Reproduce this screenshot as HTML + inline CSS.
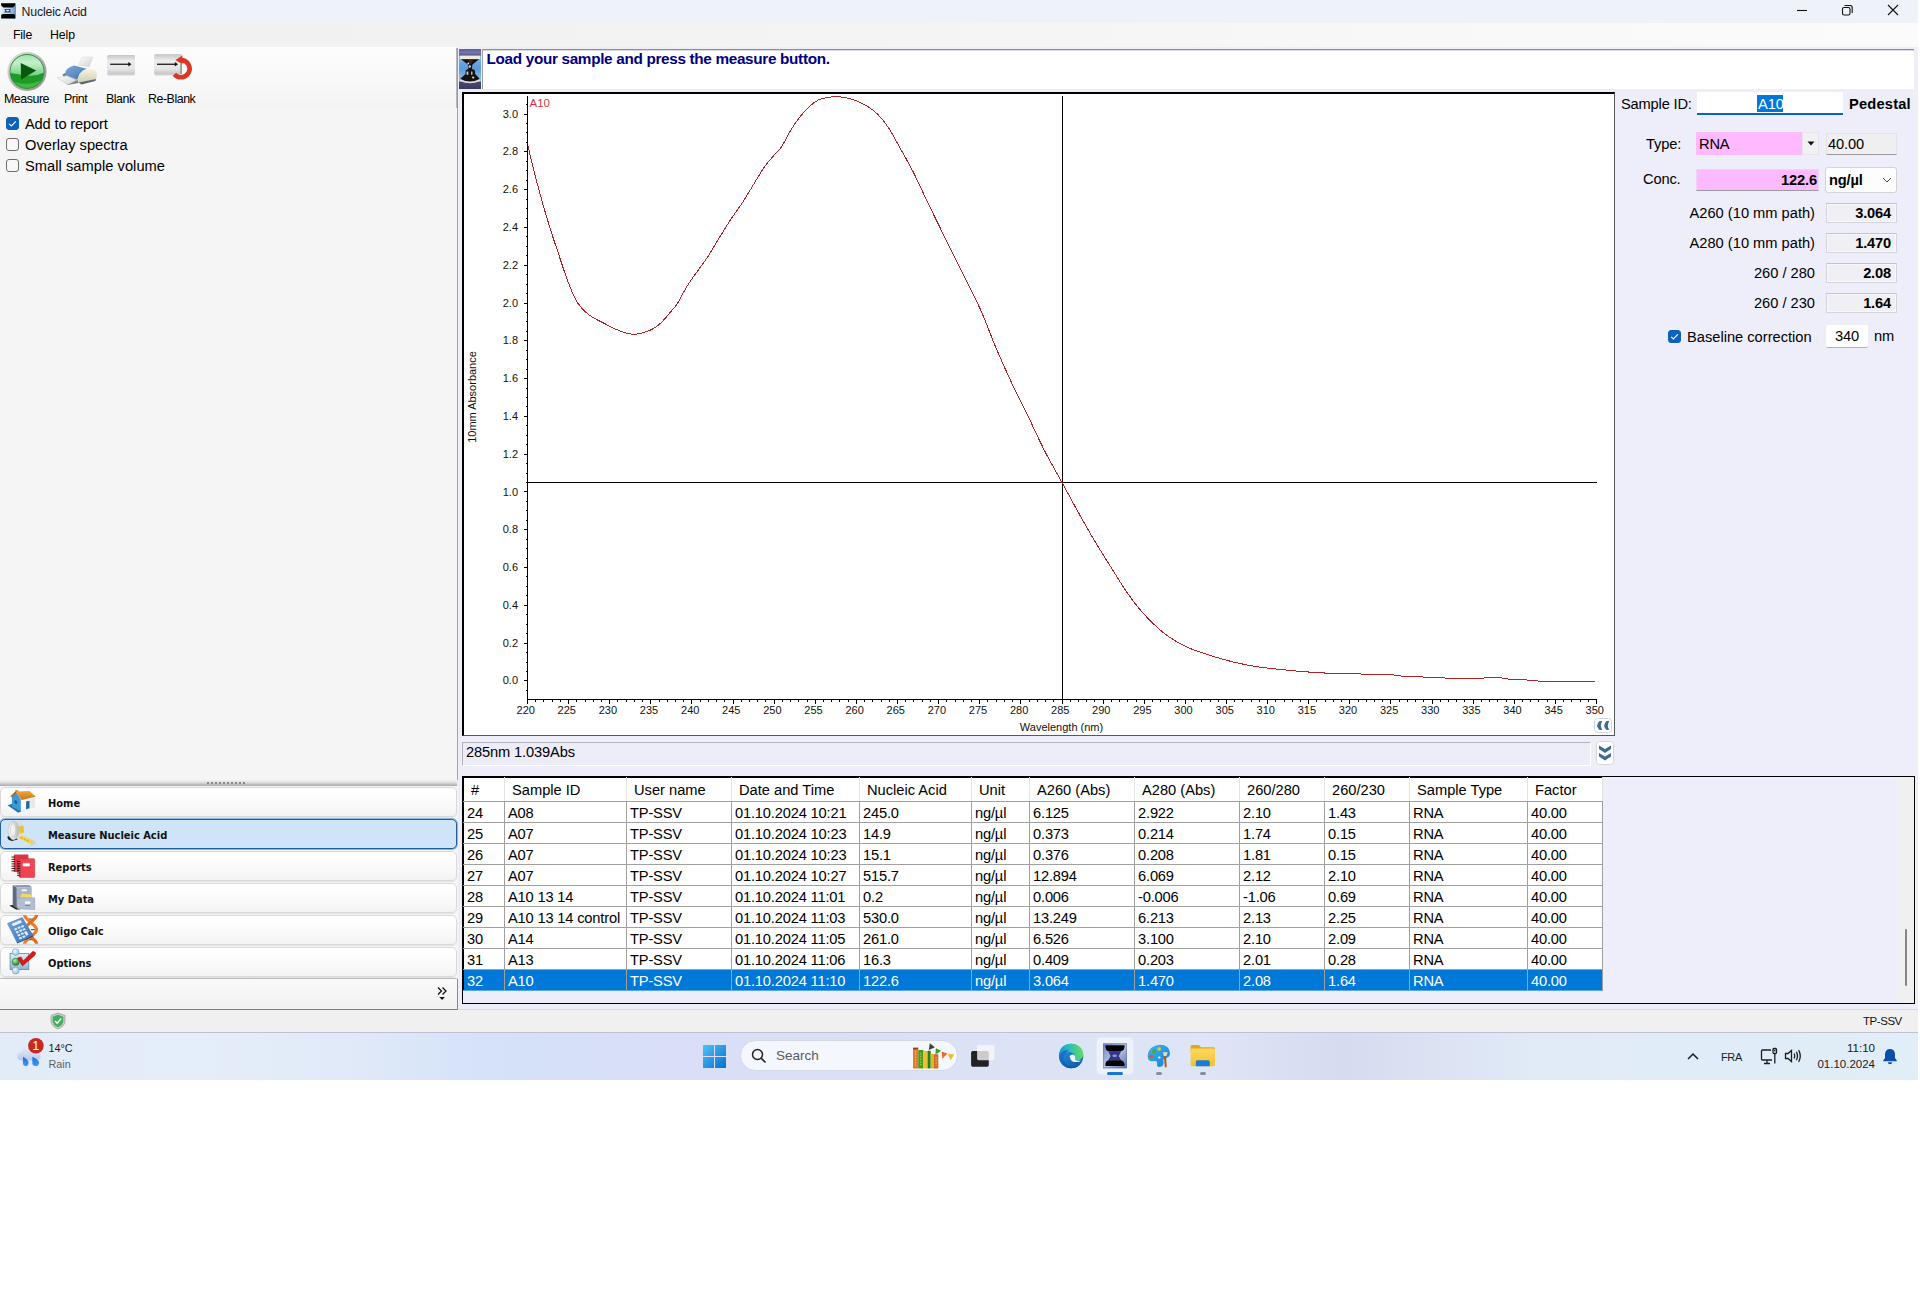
<!DOCTYPE html>
<html lang="en">
<head>
<meta charset="utf-8">
<title>Nucleic Acid</title>
<style>
*{box-sizing:border-box;margin:0;padding:0}
html,body{width:1920px;height:1312px;background:#fff;overflow:hidden}
body{position:relative;font-family:"Liberation Sans",sans-serif;color:#000;font-size:14.67px}
.abs{position:absolute}
.t{position:absolute;white-space:nowrap;line-height:1}
.seg{font-family:"DejaVu Sans","Liberation Sans",sans-serif}
#titlebar{left:0;top:0;width:1918px;height:23px;background:#eef2f9}
#menubar{left:0;top:23px;width:1918px;height:24px;background:linear-gradient(90deg,#f0f0f0 0%,#f2f2f2 25%,#f5f5f5 55%,#f9f9f9 80%,#fbfbfb 100%)}
#leftpane{left:0;top:47px;width:457px;height:962px;background:#f5f5f5}
#toolbar{left:0;top:47px;width:457px;height:61px;background:linear-gradient(#fdfdfd,#f8f8f8 60%,#f3f3f3)}
#rightpane{left:458px;top:47px;width:1460px;height:962px;background:#eeeefa}
#statusbar{left:0;top:1009px;width:1918px;height:23px;background:#f0f0f0;border-top:1px solid #dadada}
#taskbar{left:0;top:1032px;width:1918px;height:48px;background:linear-gradient(90deg,#e2ebf8 0%,#e4edf9 10%,#e1eaf8 18%,#d5e2f8 25%,#d6e0f7 30%,#d9dff6 36%,#dbe2f5 50%,#dde5f6 63%,#d6dcf0 70%,#dce3f3 75.500%,#e0ebf7 80%,#e0eef8 100%);border-top:1px solid #bcc2d0}
.lbl{font-size:14.67px;letter-spacing:-.15px}
.cb{position:absolute;width:13px;height:13px;border:1px solid #6e6e6e;border-radius:3px;background:#f8f8f8}
.cb.on{background:#0b62bd;border-color:#0b62bd}
.navbtn{position:absolute;left:0;width:457px;height:30px;border:1px solid #d9d9d9;border-radius:5px;background:linear-gradient(#ffffff,#fafafa 60%,#f2f2f2);box-shadow:0 1px 0 #e4e4e4}
.navbtn.sel{background:#cfe4f8;border:1px solid #1f5f9f;box-shadow:0 0 0 1px #8db7de}
.navtxt{position:absolute;left:47px;top:8.500px;font-family:"DejaVu Sans Condensed","DejaVu Sans",sans-serif;font-weight:bold;font-size:11px;white-space:nowrap;line-height:14px;color:#111}
.vbox{position:absolute;left:1826px;width:71px;height:20px;background:#f0f0f4;border:1px solid #d4d4dc;border-top-color:#c4c4cc;box-shadow:inset 0 0 0 1px #f8f8fc;font-weight:bold;font-size:14.67px;letter-spacing:-.17px;text-align:right;padding-right:5px;line-height:18px}
.rlbl{position:absolute;right:105px;letter-spacing:0;white-space:nowrap;font-size:14.67px;line-height:1}
table.grid{position:absolute;left:463px;top:777px;border-collapse:collapse;table-layout:fixed;font-size:14.67px;letter-spacing:-.17px;background:#fff}
table.grid td,table.grid th{border:1px solid #a0a0a0;height:21px;padding:2px 0 0 3px;white-space:nowrap;overflow:hidden;text-align:left;font-weight:normal;line-height:18px}
table.grid th{height:24px;border-color:#e4e4e4;border-bottom-color:#a0a0a0;padding:0 0 0 7px;letter-spacing:0;background:#fff}
table.grid th{border-top-color:#000}
table.grid td:first-child,table.grid th:first-child{border-left-color:#000}
table.grid tr.sel td:first-child{border-left-color:#000}
table.grid tr.sel td{background:#0078d7;color:#fff;border-color:#5aa6e6 #a0a0a0}
</style>
</head>
<body>
<div id="titlebar" class="abs"></div>
<svg class="abs" style="left:0;top:0" width="17" height="20" viewBox="0 0 17 20">
  <defs><linearGradient id="tig" x1="0" y1="0" x2="1" y2="0"><stop offset="0" stop-color="#e4f0fc"/><stop offset=".6" stop-color="#b4d0ee"/><stop offset="1" stop-color="#5e8cbc"/></linearGradient></defs>
  <rect x="1" y="3.200" width="14.900" height="15.300" fill="url(#tig)"/>
  <path d="M1.100 3.200H15.100V5.500L12.800 7.400H3.400L1.100 5.500Z" fill="#020204"/>
  <path d="M1.200 18.400V14.800L3 13.900H13.400L15.100 14.800V18.400Z" fill="#020204"/>
  <path d="M4.200 9H10.900V9.400H10.400V11.700L11.700 12.600H3.200L4.900 11.700V9.400H4.200Z" fill="#1f4f8f"/>
  <ellipse cx="7.600" cy="10.600" rx="1.700" ry=".8" fill="#d4e8fc"/>
</svg>
<div class="t" style="left:21.500px;top:6px;font-size:12.300px;letter-spacing:-.15px;color:#1a1a1a">Nucleic Acid</div>
<svg class="abs" style="left:1790px;top:0" width="120" height="22" viewBox="0 0 120 22" fill="none" stroke="#111" stroke-width="1.1">
  <path d="M7 10.5H17"/>
  <rect x="52.5" y="7.5" width="7.5" height="7.5" rx="1.6"/>
  <path d="M54.5 5.5H60A2.2 2.2 0 0 1 62.2 7.7V13"/>
  <path d="M98 5L108 15M108 5L98 15"/>
</svg>
<div id="menubar" class="abs"></div>
<div class="t" style="left:13px;top:28.500px;font-size:12.300px;letter-spacing:-.2px">File</div>
<div class="t" style="left:50px;top:28.500px;font-size:12.300px;letter-spacing:-.1px">Help</div>

<div id="leftpane" class="abs"></div>
<div id="toolbar" class="abs"></div>
<div class="abs" style="left:457px;top:47px;width:2px;height:962px;background:#f0f0f0"></div>
<div class="abs" style="left:456px;top:48px;width:2px;height:60px;background:linear-gradient(90deg,#c4c4c4,#8c8c8c)"></div>
<div class="abs" style="left:457px;top:108px;width:1px;height:672px;background:#a4a4a4"></div>

<!-- Measure icon -->
<svg class="abs" style="left:6px;top:50px" width="42" height="42" viewBox="0 0 42 42">
  <defs>
    <linearGradient id="mg2" x1="0" y1="0" x2="1" y2="1"><stop offset="0" stop-color="#ececec"/><stop offset=".5" stop-color="#b4b4b4"/><stop offset="1" stop-color="#8c8c8c"/></linearGradient>
    <linearGradient id="mg3" x1="0" y1="0" x2="0" y2="1"><stop offset="0" stop-color="#8fdc9c"/><stop offset=".5" stop-color="#c4efcc"/><stop offset="1" stop-color="#6fd07f"/></linearGradient>
    <clipPath id="mgc"><circle cx="21" cy="21.500" r="16.600"/></clipPath>
  </defs>
  <circle cx="21" cy="21.500" r="19.600" fill="url(#mg2)"/>
  <circle cx="21" cy="21.500" r="17.400" fill="#2f8f36"/>
  <circle cx="21" cy="21.500" r="16.600" fill="#1e9a26"/>
  <g clip-path="url(#mgc)">
    <path d="M0 0H42V20Q32 27 21 25.500Q10 24 0 22.500Z" fill="url(#mg3)"/>
    <path d="M4 30Q21 38 38 29V42H4Z" fill="#3dba42"/>
    <path d="M4 34Q21 43 38 33V42H4Z" fill="#229c2a"/>
  </g>
  <path d="M14.700 12.900L30.200 20.600L15.200 29.400Z" fill="#0a560c"/>
</svg>
<!-- Print / Blank / Re-Blank icons -->
<svg class="abs" style="left:50px;top:48px" width="150" height="44" viewBox="50 48 150 44">
  <defs>
    <linearGradient id="pg1" x1="0" y1="0" x2="1" y2="1"><stop offset="0" stop-color="#7fa8d6"/><stop offset=".5" stop-color="#5f8fc6"/><stop offset="1" stop-color="#3f6ea6"/></linearGradient>
    <linearGradient id="pg2" x1="0" y1="0" x2="0" y2="1"><stop offset="0" stop-color="#f6f5e4"/><stop offset="1" stop-color="#cfcdb2"/></linearGradient>
    <linearGradient id="pg3" x1="0" y1="0" x2="1" y2="1"><stop offset="0" stop-color="#ffffff"/><stop offset="1" stop-color="#cfcfcf"/></linearGradient>
    <linearGradient id="bg1" x1="0" y1="0" x2="0" y2="1"><stop offset="0" stop-color="#c6c6c6"/><stop offset=".3" stop-color="#ececec"/><stop offset=".7" stop-color="#e6e6e6"/><stop offset="1" stop-color="#c4c4c4"/></linearGradient>
  </defs>
  <!-- printer -->
  <path d="M82.400 57.200L92.800 57.200L89.100 66.800L78.500 65Z" fill="url(#pg3)" stroke="#d0d0d0" stroke-width=".5"/>
  <path d="M62.500 74.500L66 72.500L78 80.500L78.500 83L67.500 85Z" fill="#5c6268" opacity=".8"/>
  <path d="M65.600 71.500Q66.500 68 74.200 65.600L86.700 68.700Q82 71 79.700 73.800L77.300 80L65.600 75.500Z" fill="url(#pg1)"/>
  <path d="M79.700 73.800Q82 70 86.700 68.700Q93 68.500 96.100 70.700Q97.200 73 96.900 75.300L96.100 79.300L79.700 82.600L77.300 80Z" fill="url(#pg2)"/>
  <path d="M78.500 82.400L96.100 79L95.400 81L81.500 84.500Z" fill="#5f6a6a"/>
  <path d="M57.400 77.700L66.800 75.700L77 80L67.600 84.700Z" fill="url(#pg3)" stroke="#c4c4c4" stroke-width=".5"/>
  <!-- blank -->
  <rect x="107.400" y="55" width="27.400" height="20.500" rx="1.500" fill="#bdbdbd" opacity=".55"/>
  <rect x="107.400" y="55" width="27.400" height="19.600" rx="1.500" fill="url(#bg1)"/>
  <path d="M110.200 64.250H130" stroke="#111" stroke-width="1.250"/>
  <path d="M128.300 62L131.500 64.250L128.300 66.500Z" fill="#111"/>
  <!-- re-blank -->
  <rect x="154.300" y="54.300" width="27.700" height="21.200" rx="1.500" fill="#bdbdbd" opacity=".55"/>
  <rect x="154.300" y="54.300" width="27.700" height="20.300" rx="1.500" fill="url(#bg1)"/>
  <rect x="180.200" y="63.500" width="1.800" height="10.500" fill="#9a9a9a"/>
  <path d="M157 64.250H176.500" stroke="#111" stroke-width="1.250"/>
  <path d="M174.800 62L178 64.250L174.800 66.500Z" fill="#111"/>
  <path d="M181.750 60.130A8.600 8.600 0 1 1 174.410 74.230" fill="none" stroke="#dc3626" stroke-width="4.600"/>
  <path d="M175.400 59.900L182.400 55.400L182.400 64.200Z" fill="#dc3626"/>
</svg>
<div class="t" style="left:4px;top:92.500px;font-size:12.400px;letter-spacing:-.45px">Measure</div>
<div class="t" style="left:64px;top:92.500px;font-size:12.400px;letter-spacing:-.45px">Print</div>
<div class="t" style="left:106px;top:92.500px;font-size:12.400px;letter-spacing:-.45px">Blank</div>
<div class="t" style="left:148px;top:92.500px;font-size:12.400px;letter-spacing:-.45px">Re-Blank</div>

<!-- checkboxes -->
<div class="cb on" style="left:6px;top:117px"></div>
<svg class="abs" style="left:6px;top:117px" width="13" height="13" viewBox="0 0 13 13"><path d="M3.2 6.8L5.4 9L9.8 4.4" fill="none" stroke="#fff" stroke-width="1.2"/></svg>
<div class="cb" style="left:6px;top:138px"></div>
<div class="cb" style="left:6px;top:159px"></div>
<div class="t lbl" style="left:25px;top:116.500px;letter-spacing:-.16px">Add to report</div>
<div class="t lbl" style="left:25px;top:137.500px;letter-spacing:0">Overlay spectra</div>
<div class="t lbl" style="left:25px;top:158.500px;letter-spacing:.04px">Small sample volume</div>
<!-- splitter -->
<div class="abs" style="left:0;top:780px;width:457px;height:6px;background:linear-gradient(#f2f2f2,#dcdcdc 45%,#a8a8a8)"></div>
<svg class="abs" style="left:206px;top:781px" width="42" height="4" viewBox="0 0 42 4"><g fill="#8a8a8a"><rect x="1" y="1" width="2" height="2"/><rect x="5" y="1" width="2" height="2"/><rect x="9" y="1" width="2" height="2"/><rect x="13" y="1" width="2" height="2"/><rect x="17" y="1" width="2" height="2"/><rect x="21" y="1" width="2" height="2"/><rect x="25" y="1" width="2" height="2"/><rect x="29" y="1" width="2" height="2"/><rect x="33" y="1" width="2" height="2"/><rect x="37" y="1" width="2" height="2"/></g></svg>
<div class="abs" style="left:0;top:786px;width:458px;height:223px;background:#f6f6f9"></div>

<div class="navbtn" style="top:787px"><div class="navtxt">Home</div></div>
<div class="navbtn sel" style="top:819px"><div class="navtxt">Measure Nucleic Acid</div></div>
<div class="navbtn" style="top:851px"><div class="navtxt">Reports</div></div>
<div class="navbtn" style="top:883px"><div class="navtxt">My Data</div></div>
<div class="navbtn" style="top:915px"><div class="navtxt">Oligo Calc</div></div>
<div class="navbtn" style="top:947px"><div class="navtxt">Options</div></div>
<div class="abs" style="left:0;top:978px;width:457px;height:1px;background:#b9b9b9"></div>
<div class="abs" style="left:0;top:979px;width:457px;height:30px;background:linear-gradient(#fafafa,#f1f1f1)"></div>

<svg class="abs" style="left:436px;top:985px" width="14" height="16" viewBox="0 0 14 16"><path d="M2 2.500L5.500 6L2 9.500M6.500 2.500L10 6L6.500 9.500" fill="none" stroke="#111" stroke-width="1.300"/><path d="M3.300 12H8.900L6.100 15Z" fill="#111"/></svg>

<!-- nav icons -->
<svg class="abs" style="left:0;top:786px" width="46" height="192" viewBox="0 786 46 192">
  <defs>
    <linearGradient id="rf" x1="0" y1="0" x2="0" y2="1"><stop offset="0" stop-color="#f2a83a"/><stop offset="1" stop-color="#c5761a"/></linearGradient>
    <linearGradient id="wl" x1="0" y1="0" x2="1" y2="0"><stop offset="0" stop-color="#ffffff"/><stop offset="1" stop-color="#dfe5ea"/></linearGradient>
    <linearGradient id="tp" x1="0" y1="0" x2="1" y2="0"><stop offset="0" stop-color="#fafafa"/><stop offset=".6" stop-color="#d8d8d8"/><stop offset="1" stop-color="#b9b9b9"/></linearGradient>
    <linearGradient id="calc" x1="0" y1="0" x2="1" y2="1"><stop offset="0" stop-color="#6fa4dc"/><stop offset="1" stop-color="#3a74bc"/></linearGradient>
    <linearGradient id="opt" x1="0" y1="0" x2="0" y2="1"><stop offset="0" stop-color="#e4eef8"/><stop offset="1" stop-color="#8fb2d6"/></linearGradient>
    <radialGradient id="ball" cx="35%" cy="30%" r="70%"><stop offset="0" stop-color="#f4fafe"/><stop offset="1" stop-color="#9cc0e0"/></radialGradient>
    <radialGradient id="gball" cx="35%" cy="30%" r="70%"><stop offset="0" stop-color="#b8f0a8"/><stop offset="1" stop-color="#1f8a28"/></radialGradient>
  </defs>
  <!-- home -->
  <path d="M7.500 805.300L12.300 803.800L24.600 809.800L18.300 812.800Z" fill="#1f78b0"/>
  <path d="M11.900 796L16 791.800L20.900 799.700V811.300L11.900 806.400Z" fill="#3d9ad6"/>
  <path d="M20.900 800L34.700 797.400V807.500L20.900 811.300Z" fill="url(#wl)"/>
  <path d="M26.100 801.600L29.500 800.800V808.300L26.100 809.200Z" fill="#1a6a9c"/>
  <path d="M14.600 800L17 801V804.200L14.600 803.300Z" fill="#16588a"/>
  <path d="M15.300 790.300H18.300V793L15.300 793.500Z" fill="#c5761a"/>
  <path d="M10.300 796.400L15.300 791.500L16.600 792.400L12 797Z" fill="#a8600f"/>
  <path d="M15.300 791.500L29.500 791.100L35.800 796.700L21.700 799.900Z" fill="url(#rf)"/>
  <!-- tape measure -->
  <path d="M7.500 836.500Q7 840 12 841L17.500 839.500L16 835Z" fill="#1c1c1c"/>
  <path d="M13 821.300Q19 820.500 21.500 823L22.500 835L17 838.500Q14 840.500 11 839Z" fill="#dcdcdc"/>
  <ellipse cx="13.400" cy="830.500" rx="5.300" ry="9.300" fill="url(#tp)" stroke="#aaa" stroke-width=".5"/>
  <ellipse cx="13" cy="830" rx="2.700" ry="6.300" fill="#f2f2f2" stroke="#bdbdbd" stroke-width=".5"/>
  <path d="M19 826.300L23.600 825.600L23.900 832.800L19.600 833.600Z" fill="#f0c030"/>
  <path d="M17.500 837.400L22.400 835.500L35.500 841.500L29.900 843.700Z" fill="#f2d24a"/>
  <path d="M29.900 843.300L35.500 841.200L35.800 844L31 846Z" fill="#cfcfcf"/>
  <path d="M21 837.200L22 838.800M24 838.500L25 840.100M27 839.900L28 841.500" stroke="#9a8218" stroke-width=".6"/>
  <!-- reports -->
  <rect x="13.800" y="854.600" width="14.600" height="17.500" rx="1" fill="#dc3444"/>
  <rect x="19" y="858.700" width="15.700" height="18.700" rx="1" fill="#f04454" stroke="#c42838" stroke-width=".5"/>
  <rect x="22.800" y="863.200" width="7.100" height="3" rx=".8" fill="#fff" stroke="#c8c8c8" stroke-width=".4"/>
  <path d="M11.500 857H15M11.500 859.300H15M11.500 861.600H15M11.500 863.900H15M11.500 866.200H15M11.500 868.500H15M11.500 870.800H15M17 861.500H20.500M17 863.800H20.500M17 866.100H20.500M17 868.400H20.500M17 870.700H20.500M17 873H20.500M17 875.300H20.500" stroke="#2a0a0e" stroke-width=".9"/>
  <!-- my data -->
  <path d="M9.300 905.400L12.700 905L20.200 909.500H16.100Z" fill="#1c1c1c"/>
  <path d="M12.700 885.200L16.800 887.500V908.800L12.700 905.400Z" fill="#5d6a82"/>
  <path d="M12.700 885.200L29.100 885.100L31.700 887.100L16.800 887.500Z" fill="#8c98ae"/>
  <path d="M16.800 887.500L31.700 887.100V897.900H16.800Z" fill="#a6b2c6"/>
  <rect x="21.700" y="889.300" width="5.200" height="1.900" fill="#f6f6f6"/>
  <path d="M19.800 897.900L21.700 893.400L31.400 894.600L32.900 897.900Z" fill="#f2d860"/>
  <path d="M17.500 897.900H34.700V909.500L17.500 908.800Z" fill="#b2bed2" stroke="#76829a" stroke-width=".4"/>
  <rect x="25" y="901.300" width="5.200" height="2.600" fill="#f6f6f6"/>
  <rect x="25" y="905" width="5.200" height="1.100" fill="#7c889e"/>
  <!-- oligo calc -->
  <path d="M27 919.200H34.200M27 939.600H34.200M31 929.700H36" stroke="#2a6ab0" stroke-width="1.300"/>
  <path d="M24.600 915C24.600 920 36.600 924.500 36.600 929.700C36.600 934.500 24.600 939 24.600 943.700" fill="none" stroke="#f07c28" stroke-width="3.200"/>
  <path d="M36.600 915C36.600 920 24.600 924.500 24.600 929.700C24.600 934.500 36.600 939 36.600 943.700" fill="none" stroke="#e86c18" stroke-width="3.200"/>
  <path d="M7.100 923.300L8 925.500L17.500 943.500L16.800 942.400Z" fill="#1f4f8f"/>
  <path d="M7.100 923.300L22.400 917L33.200 935.300L16.800 942.400Z" fill="url(#calc)"/>
  <path d="M16.800 942.400L33.200 935.300L33.400 936.500L17.300 943.600Z" fill="#1f4f8f"/>
  <path d="M11.600 923.700L20.500 920L22 922.600L13.100 926.300Z" fill="#e8f0fa"/>
  <g fill="#e4eefa"><path d="M14 928.700L16.400 927.700L17.400 929.500L15 930.500Z"/><path d="M17.400 927.300L19.800 926.300L20.800 928.100L18.400 929.100Z"/><path d="M20.800 925.900L23.200 924.900L24.200 926.700L21.800 927.700Z"/><path d="M15.600 931.700L18 930.700L19 932.500L16.600 933.500Z"/><path d="M19 930.300L21.400 929.300L22.400 931.100L20 932.100Z"/><path d="M22.400 928.900L24.800 927.900L25.800 929.700L23.400 930.700Z"/><path d="M17.200 934.700L19.600 933.700L20.600 935.500L18.200 936.500Z"/><path d="M20.600 933.300L23 932.300L24 934.100L21.600 935.100Z"/><path d="M24 931.900L26.400 930.900L28.600 934.700L26.200 935.700Z"/><path d="M18.800 937.700L21.200 936.700L22.200 938.500L19.800 939.500Z"/><path d="M22.200 936.300L24.600 935.300L25.600 937.100L23.200 938.100Z"/></g>
  <!-- options -->
  <rect x="10.100" y="953.600" width="18.700" height="16" fill="url(#opt)" stroke="#5f86ae" stroke-width=".8"/>
  <circle cx="15.700" cy="952.100" r="3.400" fill="url(#ball)" stroke="#6f9cc4" stroke-width=".6"/>
  <circle cx="15.700" cy="970.700" r="3.400" fill="url(#ball)" stroke="#6f9cc4" stroke-width=".6"/>
  <circle cx="15.700" cy="961.800" r="3.600" fill="url(#gball)" stroke="#1f7a28" stroke-width=".6"/>
  <path d="M17.500 958L20.900 956.900L23.200 961L32.900 951.300L35.800 952.800L34.700 955.400L22.400 965.900Z" fill="#e01818" stroke="#8a0c0c" stroke-width=".5"/>
</svg>
<div id="rightpane" class="abs"></div>
<!-- instruction bar -->
<div class="abs" style="left:482px;top:49px;width:1432px;height:40px;background:#fff;border-top:1px solid #8e8e96;border-left:1px solid #9c9ca4;box-shadow:inset 0 1px 0 #d8d8e0"></div>
<svg class="abs" style="left:459px;top:49px" width="22" height="40" viewBox="0 0 22 40">
  <defs>
    <linearGradient id="ig0" x1="0" y1="0" x2="0" y2="1"><stop offset="0" stop-color="#5f5f98"/><stop offset=".5" stop-color="#7474ac"/><stop offset="1" stop-color="#55558a"/></linearGradient>
    <linearGradient id="ig1" x1="0" y1="0" x2="0" y2="1"><stop offset="0" stop-color="#7ab4e8"/><stop offset=".5" stop-color="#5a9ad8"/><stop offset="1" stop-color="#9cc4e8"/></linearGradient>
    <linearGradient id="ig2" x1="0" y1="0" x2="0" y2="1"><stop offset="0" stop-color="#4a4a72"/><stop offset="1" stop-color="#3a3a5c"/></linearGradient>
  </defs>
  <rect width="22" height="7" fill="url(#ig0)"/>
  <rect y="6.700" width="22" height="26" fill="url(#ig1)"/>
  <rect y="32.500" width="22" height="7.500" fill="url(#ig2)"/>
  <rect x=".8" y="6.700" width="20.400" height="3.400" fill="#ecebdc"/>
  <path d="M2 10.200H20L13.500 15.500L12.800 19.800L15.800 21.200L16.200 25L20.500 29.500Q21 33 11 33.500Q1 33 1.500 29.500L6.500 25L6.800 21.200L9.500 19.800L8.800 15.500Z" fill="#121212"/>
  <path d="M1.500 30Q11 35 20.500 30L20.800 32Q11 36.500 1.200 32Z" fill="#eef0f0" opacity=".9"/>
  <circle cx="9.300" cy="14.500" r=".9" fill="#fff" opacity=".9"/>
  <circle cx="10.800" cy="17.500" r="1.200" fill="#e8e8e8" opacity=".9"/>
  <rect x="7.600" y="22.500" width="1.700" height="3.300" fill="#f4ecd8" opacity=".9"/>
  <rect x="12" y="22.500" width="1.500" height="3.300" fill="#e8dcc0" opacity=".8"/>
  <circle cx="14.200" cy="28.500" r="1.100" fill="#fff4d8" opacity=".9"/>
  <path d="M9.500 11H14L12.500 15H10.500Z" fill="#5a2418" opacity=".7"/>
</svg>
<div class="t" style="left:486.500px;top:51px;font-size:15.300px;letter-spacing:-.32px;font-weight:bold;color:#000080">Load your sample and press the measure button.</div>

<!-- plot frame -->
<div class="abs" style="left:462px;top:92px;width:1153px;height:644px;background:#fff;border-top:2px solid #000;border-left:2px solid #000;border-right:1px solid #5a5a5a;border-bottom:1px solid #5a5a5a"></div>
<svg class="abs" style="left:0;top:0" width="1920" height="760" viewBox="0 0 1920 760" font-family="'Liberation Sans',sans-serif" font-size="11px">
<g stroke="#000" stroke-width="1" fill="none" shape-rendering="crispEdges">
<path d="M527.5 96V699.5H1597"/>
<path d="M527.5 690.5h-2M527.5 680.5h-4M527.5 671.5h-2M527.5 662.5h-2M527.5 652.5h-2M527.5 643.5h-4M527.5 633.5h-2M527.5 624.5h-2M527.5 614.5h-2M527.5 605.5h-4M527.5 595.5h-2M527.5 586.5h-2M527.5 576.5h-2M527.5 567.5h-4M527.5 558.5h-2M527.5 548.5h-2M527.5 539.5h-2M527.5 529.5h-4M527.5 520.5h-2M527.5 510.5h-2M527.5 501.5h-2M527.5 491.5h-4M527.5 482.5h-2M527.5 473.5h-2M527.5 463.5h-2M527.5 454.5h-4M527.5 444.5h-2M527.5 435.5h-2M527.5 425.5h-2M527.5 416.5h-4M527.5 406.5h-2M527.5 397.5h-2M527.5 388.5h-2M527.5 378.5h-4M527.5 369.5h-2M527.5 359.5h-2M527.5 350.5h-2M527.5 340.5h-4M527.5 331.5h-2M527.5 321.5h-2M527.5 312.5h-2M527.5 303.5h-4M527.5 293.5h-2M527.5 284.5h-2M527.5 274.5h-2M527.5 265.5h-4M527.5 255.5h-2M527.5 246.5h-2M527.5 236.5h-2M527.5 227.5h-4M527.5 218.5h-2M527.5 208.5h-2M527.5 199.5h-2M527.5 189.5h-4M527.5 180.5h-2M527.5 170.5h-2M527.5 161.5h-2M527.5 151.5h-4M527.5 142.5h-2M527.5 132.5h-2M527.5 123.5h-2M527.5 114.5h-4M527.5 104.5h-2M527.5 699.5v4M535.5 699.5v2M543.5 699.5v2M552.5 699.5v2M560.5 699.5v2M568.5 699.5v4M576.5 699.5v2M585.5 699.5v2M593.5 699.5v2M601.5 699.5v2M609.5 699.5v4M617.5 699.5v2M626.5 699.5v2M634.5 699.5v2M642.5 699.5v2M650.5 699.5v4M659.5 699.5v2M667.5 699.5v2M675.5 699.5v2M683.5 699.5v2M691.5 699.5v4M700.5 699.5v2M708.5 699.5v2M716.5 699.5v2M724.5 699.5v2M733.5 699.5v4M741.5 699.5v2M749.5 699.5v2M757.5 699.5v2M765.5 699.5v2M774.5 699.5v4M782.5 699.5v2M790.5 699.5v2M798.5 699.5v2M807.5 699.5v2M815.5 699.5v4M823.5 699.5v2M831.5 699.5v2M839.5 699.5v2M848.5 699.5v2M856.5 699.5v4M864.5 699.5v2M872.5 699.5v2M881.5 699.5v2M889.5 699.5v2M897.5 699.5v4M905.5 699.5v2M913.5 699.5v2M922.5 699.5v2M930.5 699.5v2M938.5 699.5v4M946.5 699.5v2M955.5 699.5v2M963.5 699.5v2M971.5 699.5v2M979.5 699.5v4M987.5 699.5v2M996.5 699.5v2M1004.5 699.5v2M1012.5 699.5v2M1020.5 699.5v4M1029.5 699.5v2M1037.5 699.5v2M1045.5 699.5v2M1053.5 699.5v2M1062.5 699.5v4M1070.5 699.5v2M1078.5 699.5v2M1086.5 699.5v2M1094.5 699.5v2M1103.5 699.5v4M1111.5 699.5v2M1119.5 699.5v2M1127.5 699.5v2M1136.5 699.5v2M1144.5 699.5v4M1152.5 699.5v2M1160.5 699.5v2M1168.5 699.5v2M1177.5 699.5v2M1185.5 699.5v4M1193.5 699.5v2M1201.5 699.5v2M1210.5 699.5v2M1218.5 699.5v2M1226.5 699.5v4M1234.5 699.5v2M1242.5 699.5v2M1251.5 699.5v2M1259.5 699.5v2M1267.5 699.5v4M1275.5 699.5v2M1284.5 699.5v2M1292.5 699.5v2M1300.5 699.5v2M1308.5 699.5v4M1316.5 699.5v2M1325.5 699.5v2M1333.5 699.5v2M1341.5 699.5v2M1349.5 699.5v4M1358.5 699.5v2M1366.5 699.5v2M1374.5 699.5v2M1382.5 699.5v2M1390.5 699.5v4M1399.5 699.5v2M1407.5 699.5v2M1415.5 699.5v2M1423.5 699.5v2M1432.5 699.5v4M1440.5 699.5v2M1448.5 699.5v2M1456.5 699.5v2M1464.5 699.5v2M1473.5 699.5v4M1481.5 699.5v2M1489.5 699.5v2M1497.5 699.5v2M1506.5 699.5v2M1514.5 699.5v4M1522.5 699.5v2M1530.5 699.5v2M1538.5 699.5v2M1547.5 699.5v2M1555.5 699.5v4M1563.5 699.5v2M1571.5 699.5v2M1580.5 699.5v2M1588.5 699.5v2M1596.5 699.5v4"/>
<path d="M1062.5 96V699M528 482.5H1597"/>
</g>
<g fill="#111" text-anchor="end">
<text x="518" y="684.4">0.0</text>
<text x="518" y="646.6">0.2</text>
<text x="518" y="608.8">0.4</text>
<text x="518" y="571.0">0.6</text>
<text x="518" y="533.3">0.8</text>
<text x="518" y="495.5">1.0</text>
<text x="518" y="457.7">1.2</text>
<text x="518" y="419.9">1.4</text>
<text x="518" y="382.1">1.6</text>
<text x="518" y="344.3">1.8</text>
<text x="518" y="306.5">2.0</text>
<text x="518" y="268.7">2.2</text>
<text x="518" y="231.0">2.4</text>
<text x="518" y="193.2">2.6</text>
<text x="518" y="155.4">2.8</text>
<text x="518" y="117.6">3.0</text>
</g><g fill="#111" text-anchor="middle">
<text x="525.7" y="714">220</text>
<text x="566.8" y="714">225</text>
<text x="607.9" y="714">230</text>
<text x="649.0" y="714">235</text>
<text x="690.2" y="714">240</text>
<text x="731.3" y="714">245</text>
<text x="772.4" y="714">250</text>
<text x="813.5" y="714">255</text>
<text x="854.6" y="714">260</text>
<text x="895.7" y="714">265</text>
<text x="936.9" y="714">270</text>
<text x="978.0" y="714">275</text>
<text x="1019.1" y="714">280</text>
<text x="1060.2" y="714">285</text>
<text x="1101.3" y="714">290</text>
<text x="1142.4" y="714">295</text>
<text x="1183.5" y="714">300</text>
<text x="1224.7" y="714">305</text>
<text x="1265.8" y="714">310</text>
<text x="1306.9" y="714">315</text>
<text x="1348.0" y="714">320</text>
<text x="1389.1" y="714">325</text>
<text x="1430.2" y="714">330</text>
<text x="1471.4" y="714">335</text>
<text x="1512.5" y="714">340</text>
<text x="1553.6" y="714">345</text>
<text x="1594.7" y="714">350</text>
<text x="1061.500" y="731">Wavelength (nm)</text>
<text transform="translate(476 397) rotate(-90)">10mm Absorbance</text>
</g>
<text x="529.500" y="107" fill="#c8393b" font-size="11.500px">A10</text>
<path d="M528.0 145.9C528.9 149.7 531.5 161.1 533.4 168.6C535.3 176.1 537.3 183.9 539.3 191.2C541.3 198.5 543.1 205.1 545.2 212.2C547.3 219.3 549.7 227.0 551.9 234.0C554.1 241.0 556.4 247.4 558.6 254.1C560.8 260.8 563.3 268.6 565.3 274.2C567.2 279.8 568.8 283.8 570.3 287.6C571.8 291.4 573.5 295.0 574.5 297.2C575.5 299.4 575.6 299.6 576.2 300.7C576.8 301.8 577.0 302.0 578.2 303.6C579.5 305.2 581.4 308.1 583.7 310.3C586.0 312.5 588.7 314.9 592.1 317.0C595.5 319.1 600.0 321.2 603.9 323.2C607.8 325.2 612.0 327.5 615.6 329.1C619.2 330.7 622.6 332.0 625.7 332.9C628.8 333.8 631.2 334.3 634.0 334.3C636.8 334.3 639.3 333.8 642.4 332.9C645.5 332.0 649.4 330.8 652.5 329.1C655.6 327.4 658.0 325.6 660.9 322.9C663.8 320.2 666.9 316.3 669.7 313.0C672.5 309.7 675.1 307.1 677.7 303.0C680.4 298.9 683.0 293.0 685.6 288.6C688.2 284.2 689.9 281.8 693.5 276.6C697.1 271.4 703.1 263.8 707.4 257.3C711.7 250.8 715.3 244.2 719.3 237.8C723.3 231.4 727.2 224.8 731.2 218.8C735.2 212.8 739.2 207.7 743.1 201.6C747.0 195.5 751.3 188.1 754.9 182.2C758.5 176.3 761.6 170.9 764.9 166.3C768.2 161.7 772.0 157.7 774.8 154.4C777.6 151.1 779.1 150.5 781.7 146.5C784.3 142.5 787.8 135.2 790.6 130.6C793.4 126.0 795.5 122.6 798.5 118.7C801.5 114.8 805.1 110.5 808.4 107.4C811.7 104.3 815.1 101.6 818.4 99.9C821.7 98.2 825.3 97.8 828.3 97.3C831.3 96.8 833.6 96.9 836.2 96.9C838.8 96.9 841.1 96.8 844.1 97.3C847.1 97.8 850.7 98.7 854.0 99.9C857.3 101.1 860.6 102.5 863.9 104.3C867.2 106.1 870.8 108.4 873.8 110.8C876.8 113.2 879.1 115.6 881.8 118.7C884.4 121.8 887.2 125.8 889.7 129.6C892.2 133.4 892.6 134.6 896.5 141.6C900.4 148.6 907.4 160.7 912.9 171.4C918.4 182.1 923.9 194.7 929.4 206.0C934.9 217.3 940.3 228.2 945.8 239.3C951.3 250.4 956.5 260.5 962.3 272.3C968.1 284.1 975.3 298.0 980.8 310.3C986.3 322.6 990.1 333.9 995.2 346.0C1000.4 358.1 1006.2 371.3 1011.7 383.0C1017.2 394.7 1022.6 405.0 1028.1 416.3C1033.6 427.6 1038.9 439.7 1044.6 450.8C1050.3 461.9 1056.8 473.0 1062.3 483.0C1067.8 493.0 1072.2 501.4 1077.5 510.9C1082.8 520.4 1088.5 530.5 1094.0 539.8C1099.5 549.1 1105.0 557.8 1110.5 566.5C1116.0 575.2 1122.0 585.1 1126.9 592.3C1131.8 599.5 1135.4 604.2 1140.0 609.6C1144.6 615.0 1149.6 620.2 1154.4 624.7C1159.2 629.2 1163.1 632.9 1168.7 636.7C1174.3 640.5 1181.1 644.4 1187.9 647.5C1194.7 650.6 1201.5 652.7 1209.5 655.2C1217.5 657.7 1227.4 660.6 1235.8 662.6C1244.2 664.6 1251.0 665.8 1259.8 667.1C1268.6 668.4 1278.1 669.3 1288.5 670.3C1298.9 671.3 1310.9 672.3 1322.1 672.9C1333.3 673.5 1344.4 673.6 1355.6 673.9C1366.8 674.2 1381.2 674.2 1389.2 674.6C1397.2 675.0 1397.1 675.8 1403.5 676.2C1409.9 676.6 1418.7 676.8 1427.5 677.2C1436.3 677.6 1447.4 678.2 1456.2 678.4C1465.0 678.6 1475.0 678.6 1480.2 678.4C1485.4 678.2 1484.6 677.4 1487.4 677.2C1490.2 677.0 1493.4 676.9 1497.0 677.2C1500.6 677.5 1503.8 678.6 1509.0 679.1C1514.2 679.6 1522.1 679.7 1528.1 680.1C1534.1 680.5 1533.7 681.1 1544.9 681.3C1556.1 681.5 1586.8 681.3 1595.2 681.3" fill="none" stroke="#b22222" stroke-width="1" shape-rendering="crispEdges"/>
</svg>
<!-- collapse buttons -->
<svg class="abs" style="left:1594px;top:718px" width="18" height="15" viewBox="0 0 18 15">
  <rect x=".5" y=".5" width="17" height="14" rx="3" fill="#fff" stroke="#d4d6de"/>
  <path d="M8.300 3Q5.500 7.500 8.300 12L5.600 12Q0.800 7.500 5.600 3ZM15.300 3Q12.500 7.500 15.300 12L12.600 12Q7.800 7.500 12.600 3Z" fill="#3d6d8e"/>
</svg>
<svg class="abs" style="left:1596px;top:741px" width="18" height="24" viewBox="0 0 18 24">
  <rect x=".5" y=".5" width="17" height="23" rx="3" fill="#fff" stroke="#d4d6de"/>
  <path d="M3 4.500L9 8L15 4.500V8L9 12L3 8ZM3 12L9 15.500L15 12V15.500L9 19.500L3 15.500Z" fill="#3d6d8e"/>
</svg>
<!-- cursor readout -->
<div class="abs" style="left:462px;top:742px;width:1129px;height:24px;background:#ededf9;border-top:1px solid #b4b4bc;border-left:1px solid #b4b4bc;border-right:1px solid #fff;border-bottom:1px solid #fff"></div>
<div class="t" style="left:466px;top:745px;font-size:14.670px;letter-spacing:-.14px">285nm 1.039Abs</div>

<!-- fields -->
<div class="t lbl" style="left:1621px;top:97px;letter-spacing:-.18px">Sample ID:</div>
<div class="abs" style="left:1697px;top:92px;width:146px;height:23px;background:#fff;border-bottom:2px solid #0a64bf"></div>
<div class="abs" style="left:1757px;top:95px;width:26px;height:17px;background:#0078d7"></div>
<div class="t lbl" style="left:1758px;top:97px;color:#fff">A10</div>
<div class="t lbl" style="left:1849px;top:97px;font-weight:bold;letter-spacing:.2px">Pedestal</div>

<div class="t lbl" style="left:1646px;top:137px">Type:</div>
<div class="abs" style="left:1696px;top:132px;width:106px;height:23px;background:#ffb9ff"></div>
<div class="abs" style="left:1802px;top:132px;width:17px;height:23px;background:#f1f1f3;border:1px solid #e6e6ea"></div>
<svg class="abs" style="left:1807px;top:141px" width="8" height="5" viewBox="0 0 8 5"><path d="M.5 .5H7.500L4 4.500Z" fill="#111"/></svg>
<div class="t lbl" style="left:1699px;top:137px">RNA</div>
<div class="abs" style="left:1826px;top:133px;width:71px;height:22px;background:#efeff1;border:1px solid #e2e2e8;border-bottom:1px solid #9a9aa2"></div>
<div class="t lbl" style="left:1828px;top:137px">40.00</div>

<div class="t lbl" style="left:1643px;top:172px">Conc.</div>
<div class="abs" style="left:1696px;top:169px;width:123px;height:22px;background:#ffb9ff;border:1px solid #f0d4f4;border-bottom:1px solid #9a9aa2"></div>
<div class="t lbl" style="left:1740px;top:173px;width:77px;text-align:right;font-weight:bold">122.6</div>
<div class="abs" style="left:1825px;top:167px;width:72px;height:26px;background:#fdfdfe;border:1px solid #d2d2d8;border-radius:3px"></div>
<div class="t lbl" style="left:1829px;top:173px;font-weight:bold">ng/µl</div>
<svg class="abs" style="left:1882px;top:177px" width="10" height="6" viewBox="0 0 10 6"><path d="M1 1L5 5L9 1" fill="none" stroke="#444" stroke-width="1"/></svg>

<div class="rlbl" style="top:206px">A260 (10 mm path)</div>
<div class="vbox" style="top:203px">3.064</div>
<div class="rlbl" style="top:236px">A280 (10 mm path)</div>
<div class="vbox" style="top:233px">1.470</div>
<div class="rlbl" style="top:266px">260 / 280</div>
<div class="vbox" style="top:263px">2.08</div>
<div class="rlbl" style="top:296px">260 / 230</div>
<div class="vbox" style="top:293px">1.64</div>

<div class="cb on" style="left:1668px;top:330px"></div>
<svg class="abs" style="left:1668px;top:330px" width="13" height="13" viewBox="0 0 13 13"><path d="M3.200 6.800L5.400 9L9.800 4.400" fill="none" stroke="#fff" stroke-width="1.200"/></svg>
<div class="t lbl" style="left:1687px;top:330px;letter-spacing:0">Baseline correction</div>
<div class="abs" style="left:1826px;top:325px;width:42px;height:23px;background:#fff;border-radius:2px;border-bottom:1px solid #b4b4bc"></div>
<div class="t lbl" style="left:1826px;top:329px;width:42px;text-align:center">340</div>
<div class="t lbl" style="left:1874px;top:329px">nm</div>
<div class="abs" style="left:462px;top:776px;width:1453px;height:228px;background:#eeeefa;border:1px solid #000"></div>
<div class="abs" style="left:1897px;top:777px;width:17px;height:226px;background:#f0f0f0"></div>
<div class="abs" style="left:1905px;top:929px;width:2px;height:57px;background:#868686;border-radius:1px"></div>
<table class="grid" style="width:1139px"><colgroup>
<col style="width:41px">
<col style="width:122px">
<col style="width:105px">
<col style="width:128px">
<col style="width:112px">
<col style="width:58px">
<col style="width:105px">
<col style="width:105px">
<col style="width:85px">
<col style="width:85px">
<col style="width:118px">
<col style="width:75px">
</colgroup><tr><th>#</th><th>Sample ID</th><th>User name</th><th>Date and Time</th><th>Nucleic Acid</th><th>Unit</th><th>A260 (Abs)</th><th>A280 (Abs)</th><th>260/280</th><th>260/230</th><th>Sample Type</th><th>Factor</th></tr>
<tr><td>24</td><td>A08</td><td>TP-SSV</td><td>01.10.2024 10:21</td><td>245.0</td><td>ng/µl</td><td>6.125</td><td>2.922</td><td>2.10</td><td>1.43</td><td>RNA</td><td>40.00</td></tr>
<tr><td>25</td><td>A07</td><td>TP-SSV</td><td>01.10.2024 10:23</td><td>14.9</td><td>ng/µl</td><td>0.373</td><td>0.214</td><td>1.74</td><td>0.15</td><td>RNA</td><td>40.00</td></tr>
<tr><td>26</td><td>A07</td><td>TP-SSV</td><td>01.10.2024 10:23</td><td>15.1</td><td>ng/µl</td><td>0.376</td><td>0.208</td><td>1.81</td><td>0.15</td><td>RNA</td><td>40.00</td></tr>
<tr><td>27</td><td>A07</td><td>TP-SSV</td><td>01.10.2024 10:27</td><td>515.7</td><td>ng/µl</td><td>12.894</td><td>6.069</td><td>2.12</td><td>2.10</td><td>RNA</td><td>40.00</td></tr>
<tr><td>28</td><td>A10 13 14</td><td>TP-SSV</td><td>01.10.2024 11:01</td><td>0.2</td><td>ng/µl</td><td>0.006</td><td>-0.006</td><td>-1.06</td><td>0.69</td><td>RNA</td><td>40.00</td></tr>
<tr><td>29</td><td>A10 13 14 control</td><td>TP-SSV</td><td>01.10.2024 11:03</td><td>530.0</td><td>ng/µl</td><td>13.249</td><td>6.213</td><td>2.13</td><td>2.25</td><td>RNA</td><td>40.00</td></tr>
<tr><td>30</td><td>A14</td><td>TP-SSV</td><td>01.10.2024 11:05</td><td>261.0</td><td>ng/µl</td><td>6.526</td><td>3.100</td><td>2.10</td><td>2.09</td><td>RNA</td><td>40.00</td></tr>
<tr><td>31</td><td>A13</td><td>TP-SSV</td><td>01.10.2024 11:06</td><td>16.3</td><td>ng/µl</td><td>0.409</td><td>0.203</td><td>2.01</td><td>0.28</td><td>RNA</td><td>40.00</td></tr>
<tr class="sel"><td>32</td><td>A10</td><td>TP-SSV</td><td>01.10.2024 11:10</td><td>122.6</td><td>ng/µl</td><td>3.064</td><td>1.470</td><td>2.08</td><td>1.64</td><td>RNA</td><td>40.00</td></tr>
</table>
<div id="statusbar" class="abs"></div>
<div class="abs" style="left:0;top:1009px;width:458px;height:1px;background:#7e7e7e"></div>
<div class="abs" style="left:457px;top:979px;width:1px;height:31px;background:#8a8a8a"></div>
<svg class="abs" style="left:50px;top:1012px" width="16" height="18" viewBox="0 0 16 18">
  <path d="M8 1L15 3.500V9Q15 14 8 17Q1 14 1 9V3.500Z" fill="#c9cccf" stroke="#9aa0a6" stroke-width=".8"/>
  <path d="M8 2.800L13.300 4.800V9Q13.300 12.800 8 15.200Q2.700 12.800 2.700 9V4.800Z" fill="#3fae5a"/>
  <path d="M5 9L7.200 11.200L11.200 6.500" fill="none" stroke="#fff" stroke-width="1.500"/>
</svg>
<div class="t" style="left:1863px;top:1016px;font-size:11.500px;letter-spacing:-.45px;color:#111">TP-SSV</div>

<div id="taskbar" class="abs"></div>
<!-- weather -->
<svg class="abs" style="left:14px;top:1036px" width="32" height="36" viewBox="0 0 32 36">
  <defs><linearGradient id="cl" x1="0" y1="0" x2="0" y2="1"><stop offset="0" stop-color="#e6ecfa"/><stop offset="1" stop-color="#b9c8ec"/></linearGradient>
  <linearGradient id="dr" x1="0" y1="0" x2="0" y2="1"><stop offset="0" stop-color="#1a6ae8"/><stop offset="1" stop-color="#3a9cf8"/></linearGradient></defs>
  <path d="M8 24.400Q3 24.400 3.200 20Q3.600 16.500 7.500 16.500Q8.500 11 14.500 10.600Q20.500 10.600 21.800 16Q26.600 16 26.600 20.500Q26.400 24.400 22 24.400Z" fill="url(#cl)"/>
  <path d="M9 20.800Q14.600 23.500 14.600 27Q14.400 30.100 11.700 30.100Q8.900 30 8.900 27Z M18.400 20.800Q25 23.500 25 27Q24.800 30.100 21.700 30.100Q18.300 30 18.300 27Z" fill="url(#dr)"/>
  <circle cx="21.900" cy="9.800" r="7.800" fill="#c42b1c"/>
</svg>
<div class="t" style="left:32.400px;top:1040px;font-size:12px;color:#fff;width:7px;text-align:center">1</div>
<div class="t" style="left:48.500px;top:1042.800px;font-size:10.800px;color:#1b1b1b">14°C</div>
<div class="t" style="left:48.500px;top:1058.800px;font-size:10.800px;color:#5f5f5f">Rain</div>
<!-- start -->
<svg class="abs" style="left:703px;top:1045px" width="23" height="23" viewBox="0 0 23 23">
  <defs><linearGradient id="wg" x1="0" y1="0" x2="1" y2="1"><stop offset="0" stop-color="#4cc2f4"/><stop offset="1" stop-color="#0a6fd0"/></linearGradient></defs>
  <path d="M0 0H11V11H0ZM12 0H23V11H12ZM0 12H11V23H0ZM12 12H23V23H12Z" fill="url(#wg)"/>
</svg>
<!-- search -->
<div class="abs" style="left:740px;top:1040px;width:218px;height:31px;border-radius:16px;background:#f4f7fd;border:1px solid #d3d9e6"></div>
<svg class="abs" style="left:751px;top:1048px" width="16" height="16" viewBox="0 0 16 16"><circle cx="6.500" cy="6.500" r="5" fill="none" stroke="#222" stroke-width="1.500"/><path d="M10.200 10.200L14.500 14.500" stroke="#222" stroke-width="1.600"/></svg>
<div class="t" style="left:776px;top:1049px;font-size:13.500px;color:#5a5a5a">Search</div>
<svg class="abs" style="left:910px;top:1040px" width="48" height="32" viewBox="910 1040 48 32">
  <rect x="913" y="1047.700" width="5.200" height="20.800" rx=".8" fill="#e8782a"/><rect x="913" y="1047.700" width="5.200" height="1.600" fill="#b03424"/>
  <rect x="918.200" y="1050" width="5.200" height="18.500" rx=".6" fill="#4a9a1c"/>
  <rect x="923.400" y="1051" width="4.200" height="17.500" rx=".6" fill="#e8c234"/>
  <rect x="927.600" y="1050.800" width="3.100" height="17.700" rx=".5" fill="#2e7c1c"/>
  <rect x="930.700" y="1053.700" width="3.200" height="14.800" rx=".5" fill="#c8c02c"/>
  <rect x="933.900" y="1054.200" width="4.400" height="14.300" rx=".6" fill="#d86a20"/>
  <path d="M915.600 1051V1066M920.800 1053V1066M936.100 1057V1066" stroke="#f6d878" stroke-width="1" stroke-dasharray="1.500 1.200" opacity=".8"/>
  <path d="M929.700 1043.300L934.900 1047.200L928.900 1050.100Z" fill="#3a4046"/>
  <path d="M935.900 1048.200L941.100 1051.100L935.400 1054.500Z" fill="#3c9a1c"/>
  <path d="M941.700 1051.600L947.400 1053.400L942.400 1058.700Z" fill="#ea6a20"/>
  <path d="M947.900 1053.400L954.200 1054.500L950.500 1060.500Z" fill="#eac020"/>
</svg>
<!-- task view -->
<svg class="abs" style="left:970px;top:1044px" width="26" height="24" viewBox="970 1044 26 24">
  <rect x="971.100" y="1051.100" width="17.700" height="15.600" rx="1.600" fill="#222"/>
  <rect x="977.100" y="1045.100" width="17.400" height="15.100" rx="1.600" fill="#f7f7f7" opacity=".8"/>
</svg>
<!-- edge -->
<svg class="abs" style="left:1056px;top:1040px" width="30" height="32" viewBox="1056 1040 30 32">
  <defs>
    <linearGradient id="eg1" x1="0" y1="0" x2="1" y2="1"><stop offset="0" stop-color="#2a9ae0"/><stop offset="1" stop-color="#0c52a0"/></linearGradient>
    <linearGradient id="eg2" x1="0" y1=".4" x2="1" y2=".3"><stop offset="0" stop-color="#1a96dc"/><stop offset=".45" stop-color="#2cc0b4"/><stop offset="1" stop-color="#6adc60"/></linearGradient>
    <linearGradient id="eg3" x1="0" y1="0" x2="1" y2="1"><stop offset="0" stop-color="#1a7ad0"/><stop offset="1" stop-color="#0a4a98"/></linearGradient>
  </defs>
  <circle cx="1071.100" cy="1056" r="12.200" fill="url(#eg1)"/>
  <path d="M1059.200 1053.500Q1060.500 1044.200 1071 1043.800Q1081 1044 1083.200 1053Q1083.800 1058.500 1078.500 1060.500Q1075 1061.500 1073 1059.500Q1075.500 1056.500 1073.500 1053.800Q1070.500 1050.800 1066 1052.500Q1061.500 1054.500 1061 1060Q1059 1057 1059.200 1053.500Z" fill="url(#eg2)"/>
  <path d="M1066.500 1052.300Q1062.500 1055.500 1064 1061Q1066.500 1067 1073.500 1066.800Q1078.500 1066.300 1081.800 1062Q1078 1068.500 1070.500 1068.200Q1061 1067.500 1059.200 1058Q1059 1054 1062 1051.500Q1065 1049.800 1069 1050.500Q1067.500 1051.200 1066.500 1052.300Z" fill="url(#eg3)"/>
  <path d="M1069.500 1056.200Q1071.500 1053.500 1074.200 1055.200Q1076.200 1057 1074.800 1059.500Q1077.500 1061.800 1081.800 1060.200Q1079 1062.500 1075 1062Q1070.800 1061.500 1070.200 1058.200Q1070 1057 1069.500 1056.200Z" fill="#eef6fc"/>
</svg>
<!-- app active -->
<div class="abs" style="left:1096px;top:1037px;width:38px;height:38px;border-radius:5px;background:#eef2fa;border:1px solid #e6eaf4"></div>
<svg class="abs" style="left:1103px;top:1043px" width="24" height="26" viewBox="1103 1043 24 26">
  <defs><linearGradient id="ap1" x1="0" y1="0" x2="1" y2="1"><stop offset="0" stop-color="#6a82c0"/><stop offset=".5" stop-color="#b8c2de"/><stop offset="1" stop-color="#5a70b0"/></linearGradient></defs>
  <rect x="1103" y="1043.800" width="23.900" height="24.200" fill="url(#ap1)"/>
  <rect x="1103" y="1043.800" width="23.900" height="24.200" fill="none" stroke="#4a5a98" stroke-width=".6"/>
  <path d="M1108.200 1051.300L1121.200 1051.300L1118.800 1056L1121.200 1060.300L1108.200 1060.300L1110.600 1056Z" fill="#34348a"/>
  <ellipse cx="1114.700" cy="1055.800" rx="2.400" ry="1.300" fill="#8a9ad8"/>
  <path d="M1105.500 1045.300Q1105 1047.500 1106 1049.500Q1107 1051.300 1109 1051.300H1120.500Q1122.500 1051.300 1123.800 1049.500Q1125 1047.500 1124.500 1045.300Z" fill="#040408"/>
  <path d="M1105.500 1066Q1105 1063.800 1106 1062Q1107 1060.300 1109 1060.300H1120.500Q1122.500 1060.300 1123.800 1062Q1125 1063.800 1124.500 1066Z" fill="#040408"/>
</svg>
<div class="abs" style="left:1107px;top:1072px;width:16px;height:3px;border-radius:2px;background:#1a76d6"></div>
<!-- paint -->
<svg class="abs" style="left:1146px;top:1042px" width="26" height="28" viewBox="1146 1042 26 28">
  <defs><linearGradient id="pt1" x1="0" y1="0" x2="1" y2="1"><stop offset="0" stop-color="#38b8f0"/><stop offset="1" stop-color="#1a80cc"/></linearGradient></defs>
  <path d="M1160 1044.800Q1169.500 1045 1170 1053Q1170 1057.500 1166 1058Q1163 1058.200 1163.500 1061Q1164.500 1066.500 1159.500 1067Q1156.500 1067 1157 1063.500Q1157.500 1060.500 1154 1061Q1148 1062.500 1147.600 1056.500Q1148 1046 1160 1044.800Z" fill="url(#pt1)"/>
  <circle cx="1154" cy="1051.300" r="1.900" fill="#4aa838"/><circle cx="1159.200" cy="1049" r="1.800" fill="#f0c830"/><circle cx="1151.300" cy="1056.500" r="1.900" fill="#d8583a"/>
  <path d="M1159.200 1055.800L1159.900 1057.100L1161.200 1057.500L1159.900 1057.900L1159.200 1059.200L1158.500 1057.900L1157.200 1057.500L1158.500 1057.100Z" fill="#e8f6fe"/>
  <path d="M1163.800 1055.500L1166 1055.500L1166.800 1067.300L1164.800 1067.300Z" fill="#9a6228"/>
  <path d="M1163 1052.300L1167.600 1052.300L1166.400 1056L1163.800 1056Z" fill="#ecdcb8"/>
</svg>
<div class="abs" style="left:1156px;top:1072px;width:6px;height:3px;border-radius:2px;background:#8a8e98"></div>
<!-- folder -->
<svg class="abs" style="left:1190px;top:1044px" width="26" height="24" viewBox="1190 1044 26 24">
  <defs><linearGradient id="fd1" x1="0" y1="0" x2="0" y2="1"><stop offset="0" stop-color="#fcd860"/><stop offset="1" stop-color="#f6c030"/></linearGradient></defs>
  <path d="M1190.600 1046.500Q1190.600 1045 1192 1045H1198Q1199 1045 1199.800 1045.800L1201 1047.300H1213.500Q1215 1047.300 1215 1048.800V1052H1190.600Z" fill="#e6a616"/>
  <rect x="1190.600" y="1048.500" width="24.400" height="17.800" rx="1.600" fill="url(#fd1)"/>
  <path d="M1195.800 1066.300V1061.700Q1195.800 1060.200 1197.300 1060.200H1208.300Q1209.800 1060.200 1209.800 1061.700V1066.300Z" fill="#1a7cd6"/>
</svg>
<div class="abs" style="left:1200px;top:1072px;width:6px;height:3px;border-radius:2px;background:#8a8e98"></div>
<!-- tray -->
<svg class="abs" style="left:1686px;top:1051px" width="14" height="10" viewBox="0 0 14 10"><path d="M2 8L7 3L12 8" fill="none" stroke="#1c1c1c" stroke-width="1.500"/></svg>
<div class="t" style="left:1721px;top:1051.500px;font-size:11px;letter-spacing:-.35px;color:#1b1b1b">FRA</div>
<svg class="abs" style="left:1760px;top:1047px" width="18" height="18" viewBox="0 0 18 18" fill="none" stroke="#1c1c1c" stroke-width="1.300">
  <path d="M11 3H2.500Q1.500 3 1.500 4V12Q1.500 13 2.500 13H12"/><path d="M4 16.500H10M7 13V16.500"/>
  <rect x="13" y="1.500" width="3.500" height="5" rx="1"/><path d="M14.800 6.500V16.500M14 3.500H15.500"/>
</svg>
<svg class="abs" style="left:1784px;top:1048px" width="18" height="16" viewBox="0 0 18 16" fill="none" stroke="#1c1c1c" stroke-width="1.300">
  <path d="M1.500 5.500H4L7.500 2.500V13.500L4 10.500H1.500Z"/><path d="M10 5.500Q11.500 8 10 10.500M12.300 3.800Q14.800 8 12.300 12.200M14.600 2.200Q18 8 14.600 13.800"/>
</svg>
<div class="t" style="left:1800px;top:1043px;width:75px;text-align:right;font-size:11.500px;color:#1b1b1b">11:10</div>
<div class="t" style="left:1800px;top:1059px;width:75px;text-align:right;font-size:11.500px;color:#1b1b1b">01.10.2024</div>
<svg class="abs" style="left:1882px;top:1048px" width="16" height="17" viewBox="0 0 16 17">
  <path d="M8 1Q12.500 1 13 6V10L14.800 12.500V13.300H1.200V12.500L3 10V6Q3.500 1 8 1Z" fill="#0a4fa8"/>
  <path d="M5.800 14.300H10.200Q10 16.300 8 16.300Q6 16.300 5.800 14.300Z" fill="#0a4fa8"/>
</svg>
</body>
</html>
